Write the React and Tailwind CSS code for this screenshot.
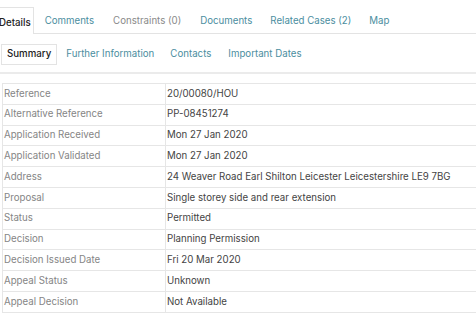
const rows = [
  ['Reference', '20/00080/HOU'],
  ['Alternative Reference', 'PP-08451274'],
  ['Application Received', 'Mon 27 Jan 2020'],
  ['Application Validated', 'Mon 27 Jan 2020'],
  ['Address', '24 Weaver Road Earl Shilton Leicester Leicestershire LE9 7BG'],
  ['Proposal', 'Single storey side and rear extension'],
  ['Status', 'Permitted'],
  ['Decision', 'Planning Permission'],
  ['Decision Issued Date', 'Fri 20 Mar 2020'],
  ['Appeal Status', 'Unknown'],
  ['Appeal Decision', 'Not Available'],
];

const App = () => {
  return (
    <div className="w-[476px] h-[317px] bg-white overflow-hidden text-[9.7px]" style={{ fontFamily: 'Inter, "Noto Sans", sans-serif' }}>
      {/* Main tabs */}
      <div className="flex items-end h-[34px] border-b border-[#e3e3e3] ml-[-6px]">
        <div className="h-[27px] pl-[4px] pr-[2px] pt-[4px] flex items-center border border-b-0 border-[#e3e3e3] bg-white mb-[-1px] text-[#222] font-medium">Details</div>
        <div className="h-[27px] ml-[2px] px-[9px] pt-[4px] flex items-center text-[#4b8ea0]">Comments</div>
        <div className="h-[27px] pl-[10px] pr-[9px] pt-[4px] flex items-center text-[#8a8a8a]">Constraints (0)</div>
        <div className="h-[27px] pl-[10px] pr-[9px] pt-[4px] flex items-center text-[#4b8ea0]">Documents</div>
        <div className="h-[27px] px-[9px] pt-[4px] flex items-center text-[#4b8ea0]">Related Cases (2)</div>
        <div className="h-[27px] px-[9px] pt-[4px] flex items-center text-[#4b8ea0]">Map</div>
      </div>

      {/* Sub tabs */}
      <div className="flex items-center h-[40px] pt-[3px] border-b-2 border-[#ebebeb] pl-[1px]">
        <div className="h-[21px] px-[5px] flex items-center border border-[#e3e3e3] text-[#222] font-medium">Summary</div>
        <div className="ml-[1px] px-[8px] text-[#4b8ea0]">Further Information</div>
        <div className="px-[8px] text-[#4b8ea0]">Contacts</div>
        <div className="pl-[9px] pr-[8px] text-[#4b8ea0]">Important Dates</div>
      </div>

      {/* Details table */}
      <div className="mt-[9px] ml-[2px] border-t border-l border-[#e6e6e6]">
        {rows.map(([label, value]) => (
          <div key={label} className="flex h-[20.8px] border-b border-[#e6e6e6]">
            <div className="w-[163px] shrink-0 pl-[1px] flex items-center text-[#858585] border-r border-[#e6e6e6]">{label}</div>
            <div className="pl-[1px] flex items-center text-[#444] whitespace-nowrap">{value}</div>
          </div>
        ))}
      </div>
    </div>
  );
};

export default App;
